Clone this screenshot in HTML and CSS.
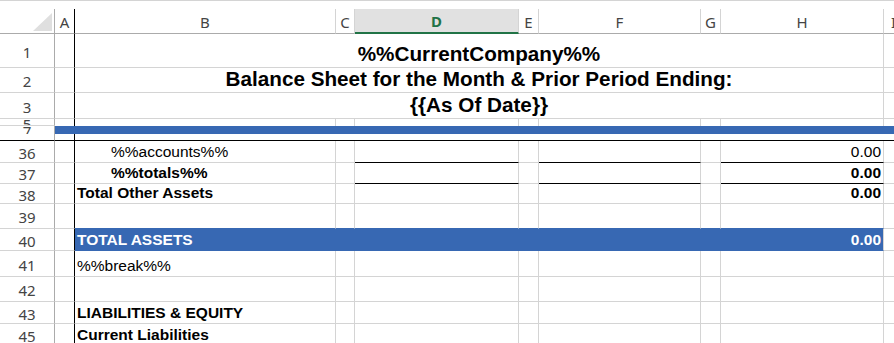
FILE: index.html
```html
<!DOCTYPE html>
<html lang="en">
<head>
  <meta charset="UTF-8" />
  <title>Balance Sheet</title>
  <link rel="stylesheet" href="styles.css">
</head>
<body>

<div class="sheet">
  <div class="topline"></div>

  <!-- Заголовки столбцов -->
  <div class="row hdr">
    <div class="corner">
      <svg width="22" height="20" viewBox="0 0 22 20"><polygon points="21,1 21,19 2,19" fill="#dfdfdf"/></svg>
    </div>
    <div class="col a">A</div>
    <div class="col">B</div>
    <div class="col">C</div>
    <div class="col sel">D</div>
    <div class="col">E</div>
    <div class="col">F</div>
    <div class="col">G</div>
    <div class="col">H</div>
    <div class="col last">I</div>
  </div>

  <!-- Шапка отчёта -->
  <div class="row h34">
    <div class="rh">1</div><div class="c a"></div>
    <div class="c wide title">%%CurrentCompany%%</div><div class="c last"></div>
  </div>
  <div class="row h25">
    <div class="rh">2</div><div class="c a"></div>
    <div class="c wide title">Balance Sheet for the Month &amp; Prior Period Ending:</div><div class="c last"></div>
  </div>
  <div class="row h26">
    <div class="rh">3</div><div class="c a"></div>
    <div class="c wide title">{{As Of Date}}</div><div class="c last"></div>
  </div>

  <!-- Скрытые строки -->
  <div class="row h7">
    <div class="rh tiny"><span>5</span></div><div class="c a nb"></div>
    <div class="c nb"></div><div class="c nb"></div><div class="c nb"></div><div class="c nb"></div>
    <div class="c nb"></div><div class="c nb"></div><div class="c nb"></div><div class="c nb last"></div>
  </div>
  <div class="row h8">
    <div class="rh tiny nb"><span>7</span></div><div class="band"></div>
  </div>
  <div class="row h7 freeze">
    <div class="rh"></div><div class="c a"></div><div class="c rest"></div>
  </div>

  <!-- Данные -->
  <div class="row h22">
    <div class="rh">36</div><div class="c a"></div>
    <div class="c ind">%%accounts%%</div><div class="c"></div><div class="c ul"></div><div class="c"></div>
    <div class="c ul"></div><div class="c"></div><div class="c ul num">0.00</div><div class="c last"></div>
  </div>
  <div class="row h21">
    <div class="rh">37</div><div class="c a"></div>
    <div class="c ind b">%%totals%%</div><div class="c"></div><div class="c ul"></div><div class="c"></div>
    <div class="c ul"></div><div class="c"></div><div class="c ul num b">0.00</div><div class="c last"></div>
  </div>
  <div class="row h20">
    <div class="rh">38</div><div class="c a"></div>
    <div class="c b">Total Other Assets</div><div class="c"></div><div class="c"></div><div class="c"></div>
    <div class="c"></div><div class="c"></div><div class="c num b">0.00</div><div class="c last"></div>
  </div>
  <div class="row h25">
    <div class="rh">39</div><div class="c a"></div>
    <div class="c tofill"></div><div class="c tofill"></div><div class="c tofill"></div><div class="c tofill"></div>
    <div class="c tofill"></div><div class="c tofill"></div><div class="c tofill"></div><div class="c last"></div>
  </div>
  <div class="row h22">
    <div class="rh">40</div><div class="c a"></div>
    <div class="c wide fill b"><span>TOTAL ASSETS</span><span>0.00</span></div><div class="c last"></div>
  </div>
  <div class="row h26">
    <div class="rh">41</div><div class="c a"></div>
    <div class="c">%%break%%</div><div class="c"></div><div class="c"></div><div class="c"></div>
    <div class="c"></div><div class="c"></div><div class="c"></div><div class="c last"></div>
  </div>
  <div class="row h25">
    <div class="rh">42</div><div class="c a"></div>
    <div class="c"></div><div class="c"></div><div class="c"></div><div class="c"></div>
    <div class="c"></div><div class="c"></div><div class="c"></div><div class="c last"></div>
  </div>
  <div class="row h22">
    <div class="rh">43</div><div class="c a"></div>
    <div class="c b">LIABILITIES &amp; EQUITY</div><div class="c"></div><div class="c"></div><div class="c"></div>
    <div class="c"></div><div class="c"></div><div class="c"></div><div class="c last"></div>
  </div>
  <div class="row h22">
    <div class="rh">45</div><div class="c a"></div>
    <div class="c b">Current Liabilities</div><div class="c"></div><div class="c"></div><div class="c"></div>
    <div class="c"></div><div class="c"></div><div class="c"></div><div class="c last"></div>
  </div>
</div>

</body>
</html>
```

FILE: styles.css
```css
body {
  margin: 0;
  background: #fff;
  overflow: hidden;
}

.sheet {
  font-family: "Liberation Sans", Arial, sans-serif;
  font-size: 15.5px;
  color: #000;
}

.topline {
  height: 9px;
  border-top: 1px solid #d4d4d4;
  box-sizing: border-box;
}

/* Сетка: заголовок строк, A..H, I */
.row {
  display: grid;
  grid-template-columns: 55px 20px 261px 19px 164px 20px 162px 20px 163px 1fr;
}

.row > div {
  box-sizing: border-box;
  min-width: 0;
}

.h34 { height: 34px; }
.h26 { height: 26px; }
.h25 { height: 25px; }
.h22 { height: 22px; }
.h21 { height: 21px; }
.h20 { height: 20px; }
.h8 { height: 8px; }
.h7 { height: 7px; }

/* Заголовки столбцов */
.hdr {
  height: 25px;
  font-family: "Noto Sans", "Open Sans", sans-serif;
  font-size: 15px;
  color: #444;
}

.corner {
  border-right: 1px solid #ababab;
  border-bottom: 1px solid #ababab;
  display: flex;
  justify-content: flex-end;
  align-items: flex-end;
  padding: 0 1px 1px 0;
}

.corner svg {
  display: block;
}

.col {
  border-right: 1px solid #d4d4d4;
  border-bottom: 1px solid #ababab;
  display: flex;
  align-items: center;
  justify-content: center;
  padding-top: 1px;
}

.col.a {
  border-right-color: #000;
}

.col.sel {
  background: #e1e1e1;
  color: #217346;
  font-weight: bold;
  border-bottom: 2px solid #217346;
}

.col.last {
  justify-content: flex-start;
  padding-left: 7px;
  border-right: none;
}

/* Номера строк */
.rh {
  font-family: "Noto Sans", "Open Sans", sans-serif;
  font-size: 15px;
  color: #444;
  border-right: 1px solid #ababab;
  border-bottom: 1px solid #d4d4d4;
  display: flex;
  align-items: center;
  justify-content: center;
  padding-top: 2px;
  overflow: hidden;
}

.rh.tiny {
  align-items: flex-start;
  padding-top: 0;
  line-height: 15px;
}

.rh.tiny span {
  margin-top: -2px;
}

.rh.nb {
  border-bottom: none;
}

/* Ячейки */
.c {
  border-right: 1px solid #d4d4d4;
  border-bottom: 1px solid #d4d4d4;
  display: flex;
  align-items: flex-end;
  padding: 0 2px 1px 2px;
  white-space: nowrap;
  overflow: hidden;
}

.c.a {
  border-right-color: #000;
}

.c.last {
  border-right: none;
}

.c.nb {
  border-bottom: none;
}

.wide {
  grid-column: span 7;
}

.rest {
  grid-column: span 8;
  border-right: none;
}

.title {
  justify-content: center;
  font-size: 20.7px;
  font-weight: bold;
  padding-bottom: 1px;
}

.b {
  font-weight: bold;
}

.ind {
  padding-left: 36px;
}

.num {
  justify-content: flex-end;
}

.ul {
  border-bottom-color: #000;
}

.freeze > div {
  border-bottom-color: #000;
}

.band {
  grid-column: span 9;
  background: #3768b3;
}

.tofill {
  border-bottom-color: #3768b3;
}

.fill {
  background: #3768b3;
  color: #fff;
  border-bottom-color: #3768b3;
  justify-content: space-between;
}
```
